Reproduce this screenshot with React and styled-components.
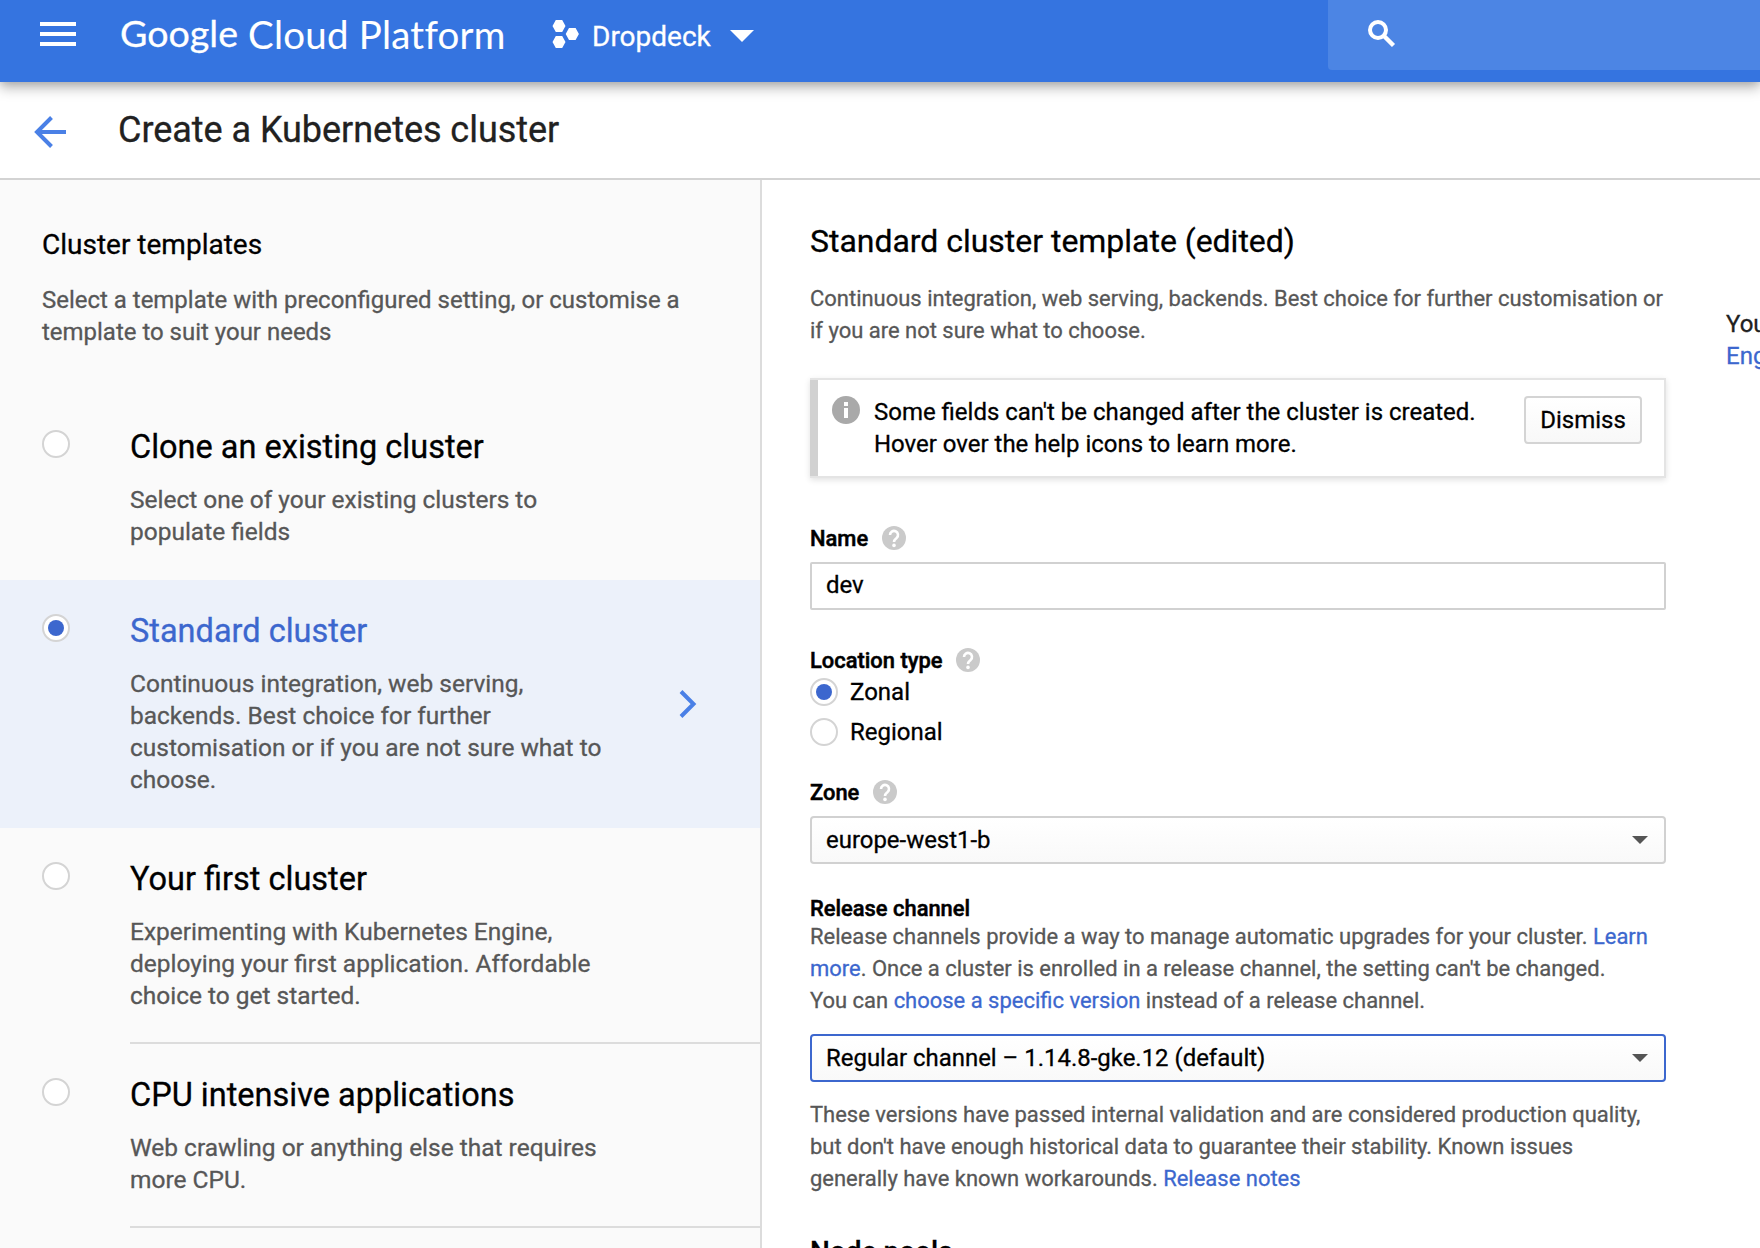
import React from "react";
import styled, { createGlobalStyle, css } from "styled-components";

const GlobalStyle = createGlobalStyle`
  *, *::before, *::after { box-sizing: border-box; }
  body {
    margin: 0;
    overflow: hidden;
    background: #fff;
    color: #000;
    font-family: Roboto, "Liberation Sans", sans-serif;
    -webkit-font-smoothing: antialiased;
    -webkit-text-stroke: 0.3px currentColor;
  }
  h1, h2, h3, p { margin: 0; font-weight: 400; }
  svg { display: block; flex: none; }
`;

const Page = styled.div`
  display: flex;
  flex-direction: column;
  width: 1760px;
  height: 1248px;
  overflow: hidden;
`;

/* Top bar */
const TopBar = styled.header`
  position: relative;
  z-index: 2;
  display: flex;
  align-items: flex-start;
  flex: none;
  height: 82px;
  padding-left: 40px;
  background: #3574e0;
  color: #fff;
  box-shadow: 0 0 8px rgba(0, 0, 0, 0.14), 0 6px 12px rgba(0, 0, 0, 0.28);
`;

const MenuIcon = styled.svg`
  margin-top: 22px;
`;

const Brand = styled.div`
  display: flex;
  width: 433px;
  margin: 11px 0 0 43px;
  font-family: Lato, Roboto, sans-serif;
  font-size: 38.4px;
  line-height: 44px;
  white-space: nowrap;
`;

const BrandName = styled.span`
  width: 129px;
  padding-left: 1px;
  font-size: 37.6px;
`;

const BrandProduct = styled.span`
  padding-top: 1px;
  font-variant-ligatures: none;
  letter-spacing: 0.26px;
  -webkit-text-stroke-width: 0.1px;
`;

const Project = styled.div`
  display: flex;
  align-items: flex-start;
`;

const HexIcon = styled.svg`
  margin-top: 20px;
`;

const ProjectName = styled.span`
  width: 118px;
  margin: 19px 20px 0 13px;
  font-size: 28px;
  line-height: 36px;
`;

const ProjectCaret = styled.svg`
  margin-top: 30px;
`;

const SearchBox = styled.div`
  width: 432px;
  height: 70px;
  margin-left: auto;
  padding: 20px 0 0 40px;
  border-bottom-left-radius: 4px;
  background: #4c85e4;
`;

/* Page title row */
const TitleBar = styled.div`
  display: flex;
  align-items: flex-start;
  flex: none;
  height: 98px;
  padding: 28px 0 0 33px;
  border-bottom: 2px solid #d3d3d3;
`;

const BackIcon = styled.svg`
  margin-top: 5px;
`;

const PageTitle = styled.h1`
  margin-left: 51px;
  color: #212121;
  font-size: 36px;
  line-height: 40px;
  letter-spacing: -0.04px;
`;

const Body = styled.div`
  display: flex;
  flex: 1;
  min-height: 0;
`;

/* Sidebar */
const Sidebar = styled.aside`
  flex: none;
  width: 762px;
  overflow: hidden;
  border-right: 2px solid #dcdcdc;
  background: #fafafa;
`;

const SidebarHead = styled.div`
  height: 216px;
  padding: 47px 0 0 42px;
`;

const SidebarTitle = styled.h2`
  font-size: 28px;
  line-height: 36px;
`;

const SidebarText = styled.p`
  margin-top: 21px;
  color: #575757;
  font-size: 23.97px;
  line-height: 32px;
  white-space: nowrap;
`;

const Template = styled.div`
  display: flex;
  padding-left: 42px;
  background: ${(p) => (p.$active ? "#ecf1fa" : "transparent")};
`;

const TemplateBody = styled.div`
  display: flex;
  flex: 1;
  align-items: center;
  margin-left: 60px;
  border-bottom: ${(p) => (p.$line ? "2px solid #dcdcdc" : "0")};
`;

const TemplateCopy = styled.div`
  width: 549px;
  padding: 31px 0 ${(p) => (p.$line ? 30 : 32)}px;
`;

const TemplateTitle = styled.h3`
  color: ${(p) => (p.$active ? "#3c67ce" : "#000")};
  font-size: 32.5px;
  line-height: 40px;
`;

const TemplateText = styled.p`
  margin-top: 17px;
  color: #575757;
  font-size: 24.48px;
  line-height: 32px;
  white-space: nowrap;
`;

const Radio = styled.span`
  display: flex;
  align-items: center;
  justify-content: center;
  flex: none;
  width: 28px;
  height: 28px;
  border: 2px solid #d4d4d4;
  border-radius: 50%;
  background: #fff;
  ${(p) =>
    p.$inTemplate &&
    css`
      margin-top: 34px;
    `}
  ${(p) =>
    p.$checked &&
    css`
      &::after {
        content: "";
        width: 16px;
        height: 16px;
        border-radius: 50%;
        background: #3c67ce;
      }
    `}
`;

/* Form */
const Form = styled.main`
  display: flex;
  flex-direction: column;
  flex: none;
  width: 856px;
  margin-left: 48px;
  padding-top: 41px;

  > * {
    flex: none;
  }
`;

const FormTitle = styled.h2`
  font-size: 31.95px;
  line-height: 40px;
`;

const Note = styled.p`
  margin-top: ${(p) => p.$top}px;
  color: #575757;
  font-size: 21.98px;
  line-height: 32px;
  white-space: nowrap;
`;

const Link = styled.a`
  color: #3c67ce;
`;

const Notice = styled.div`
  display: flex;
  align-items: flex-start;
  height: 100px;
  margin-top: 31px;
  border: 2px solid #e4e4e4;
  border-left: 0;
  box-shadow: 0 2px 6px rgba(0, 0, 0, 0.12);
`;

const NoticeBar = styled.span`
  align-self: stretch;
  width: 8px;
  background: #d1d1d1;
`;

const InfoIcon = styled.svg`
  margin: 16px 0 0 14px;
`;

const NoticeText = styled.p`
  flex: 1;
  margin: 16px 0 0 14px;
  font-size: 23.97px;
  line-height: 32px;
  white-space: nowrap;
`;

const DismissButton = styled.button`
  width: 118px;
  height: 48px;
  margin: 16px 22px 0 0;
  padding: 0;
  border: 2px solid #d4d4d4;
  border-radius: 4px;
  background: linear-gradient(#fff, #f8f8f8);
  color: #000;
  font: 24px/44px Roboto, sans-serif;
`;

const Label = styled.div`
  display: flex;
  align-items: center;
  gap: 14px;
  height: 24px;
  margin-top: ${(p) => p.$top}px;
  font-size: 21.9px;
  font-weight: 500;
  line-height: 24px;
  -webkit-text-stroke-width: 0.5px;
`;

const LabelText = styled.span`
  padding-top: 2px;
`;

const Field = styled.div`
  height: 48px;
  margin-top: 12px;
  padding: 0 14px;
  border: 2px solid #d1d1d1;
  border-radius: 2px;
  font-size: 24px;
  line-height: 42px;
`;

const Select = styled.div`
  display: flex;
  align-items: center;
  justify-content: space-between;
  height: 48px;
  margin-top: ${(p) => p.$top}px;
  padding: 0 16px 0 14px;
  border: 2px solid ${(p) => (p.$focus ? "#3c67ce" : "#d1d1d1")};
  border-radius: 4px;
  background: linear-gradient(#fff, #f9f9f9);
  font-size: 23.95px;
  line-height: 44px;
`;

const Option = styled.div`
  display: flex;
  align-items: center;
  gap: 12px;
  height: 28px;
  margin-top: ${(p) => p.$top}px;
  font-size: 24px;
  line-height: 28px;
`;

const SectionTitle = styled.h2`
  margin-top: 39px;
  font-size: 28px;
  font-weight: 500;
  line-height: 36px;
`;

const Aside = styled.div`
  margin-left: 60px;
  padding-top: 128px;
  color: #212121;
  font-size: 24px;
  line-height: 32px;
  white-space: nowrap;
`;

const Help = () => (
  <svg width="24" height="24" viewBox="0 0 24 24">
    <circle cx="12" cy="12" r="12" fill="#cacaca" />
    <path
      d="M8 9a4 4 0 1 1 6.7 2.9c-1.6 1.4-2.7 1.9-2.7 4.2"
      fill="none"
      stroke="#fff"
      strokeWidth="2.6"
    />
    <circle cx="12" cy="19.4" r="1.8" fill="#fff" />
  </svg>
);

const Caret = () => (
  <svg width="16" height="8" viewBox="0 0 16 8">
    <path d="M0 0h16L8 8z" fill="#555" />
  </svg>
);

const Chevron = () => (
  <svg width="18" height="28" viewBox="0 0 18 28">
    <path d="M2 1.5L14.5 14L2 26.5" fill="none" stroke="#4a80e6" strokeWidth="4" />
  </svg>
);

const lines = (list) =>
  list.map((line, i) => (
    <React.Fragment key={line}>
      {i > 0 && <br />}
      {line}
    </React.Fragment>
  ));

const templates = [
  {
    title: "Clone an existing cluster",
    text: ["Select one of your existing clusters to", "populate fields"],
  },
  {
    title: "Standard cluster",
    text: [
      "Continuous integration, web serving,",
      "backends. Best choice for further",
      "customisation or if you are not sure what to",
      "choose.",
    ],
    active: true,
  },
  {
    title: "Your first cluster",
    text: [
      "Experimenting with Kubernetes Engine,",
      "deploying your first application. Affordable",
      "choice to get started.",
    ],
    line: true,
  },
  {
    title: "CPU intensive applications",
    text: ["Web crawling or anything else that requires", "more CPU."],
    line: true,
  },
];

export default function App() {
  return (
    <Page>
      <GlobalStyle />
      <TopBar>
        <MenuIcon width="36" height="24" viewBox="0 0 36 24">
          <path d="M0 0h36v4H0zM0 10h36v4H0zM0 20h36v4H0z" fill="#fff" />
        </MenuIcon>
        <Brand>
          <BrandName>Google</BrandName>
          <BrandProduct>Cloud Platform</BrandProduct>
        </Brand>
        <Project>
          <HexIcon width="27" height="28" viewBox="0 0 27 28" fill="#fff">
            <path d="M.5 6L3.8 0h6.4l3.3 6-3.3 6H3.8zM.5 22l3.3-6h6.4l3.3 6-3.3 6H3.8zM13.7 14L17 8h6.6l3.3 6-3.3 6H17z" />
          </HexIcon>
          <ProjectName>Dropdeck</ProjectName>
          <ProjectCaret width="24" height="12" viewBox="0 0 24 12">
            <path d="M0 0h24L12 12z" fill="#fff" />
          </ProjectCaret>
        </Project>
        <SearchBox>
          <svg width="28" height="28" viewBox="0 0 28 28" fill="none" stroke="#fff">
            <circle cx="10" cy="10" r="8" strokeWidth="4" />
            <path d="M15.5 15.5L25.5 25.5" strokeWidth="4.4" />
          </svg>
        </SearchBox>
      </TopBar>

      <TitleBar>
        <BackIcon width="34" height="34" viewBox="0 0 34 34" fill="none" stroke="#4a80e6" strokeWidth="4">
          <path d="M33 17H4M18.5 2.5L4 17L18.5 31.5" />
        </BackIcon>
        <PageTitle>Create a Kubernetes cluster</PageTitle>
      </TitleBar>

      <Body>
        <Sidebar>
          <SidebarHead>
            <SidebarTitle>Cluster templates</SidebarTitle>
            <SidebarText>
              {lines([
                "Select a template with preconfigured setting, or customise a",
                "template to suit your needs",
              ])}
            </SidebarText>
          </SidebarHead>
          {templates.map((t) => (
            <Template key={t.title} $active={t.active}>
              <Radio $inTemplate $checked={t.active} />
              <TemplateBody $line={t.line}>
                <TemplateCopy $line={t.line}>
                  <TemplateTitle $active={t.active}>{t.title}</TemplateTitle>
                  <TemplateText>{lines(t.text)}</TemplateText>
                </TemplateCopy>
                {t.active && <Chevron />}
              </TemplateBody>
            </Template>
          ))}
        </Sidebar>

        <Form>
          <FormTitle>Standard cluster template (edited)</FormTitle>
          <Note $top={22}>
            {lines([
              "Continuous integration, web serving, backends. Best choice for further customisation or",
              "if you are not sure what to choose.",
            ])}
          </Note>
          <Notice>
            <NoticeBar />
            <InfoIcon width="28" height="28" viewBox="0 0 28 28">
              <circle cx="14" cy="14" r="14" fill="#a9a9a9" />
              <path d="M12 6h4v4h-4zM12 12h4v10h-4z" fill="#fff" />
            </InfoIcon>
            <NoticeText>
              {lines([
                "Some fields can't be changed after the cluster is created.",
                "Hover over the help icons to learn more.",
              ])}
            </NoticeText>
            <DismissButton>Dismiss</DismissButton>
          </Notice>

          <Label $top={48}>
            <LabelText>Name</LabelText> <Help />
          </Label>
          <Field>dev</Field>

          <Label $top={38}>
            <LabelText>Location type</LabelText> <Help />
          </Label>
          <Option $top={6}>
            <Radio $checked />
            Zonal
          </Option>
          <Option $top={12}>
            <Radio />
            Regional
          </Option>

          <Label $top={34}>
            <LabelText>Zone</LabelText> <Help />
          </Label>
          <Select $top={12}>
            europe-west1-b
            <Caret />
          </Select>

          <Label $top={32}>
            <LabelText>Release channel</LabelText>
          </Label>
          <Note $top={1}>
            Release channels provide a way to manage automatic upgrades for your cluster. <Link>Learn</Link>
            <br />
            <Link>more</Link>. Once a cluster is enrolled in a release channel, the setting can't be changed.
            <br />
            You can <Link>choose a specific version</Link> instead of a release channel.
          </Note>
          <Select $top={17} $focus>
            Regular channel – 1.14.8-gke.12 (default)
            <Caret />
          </Select>
          <Note $top={17}>
            These versions have passed internal validation and are considered production quality,
            <br />
            but don't have enough historical data to guarantee their stability. Known issues
            <br />
            generally have known workarounds. <Link>Release notes</Link>
          </Note>
          <SectionTitle>Node pools</SectionTitle>
        </Form>

        <Aside>
          You
          <br />
          <Link>Eng</Link>
        </Aside>
      </Body>
    </Page>
  );
}
